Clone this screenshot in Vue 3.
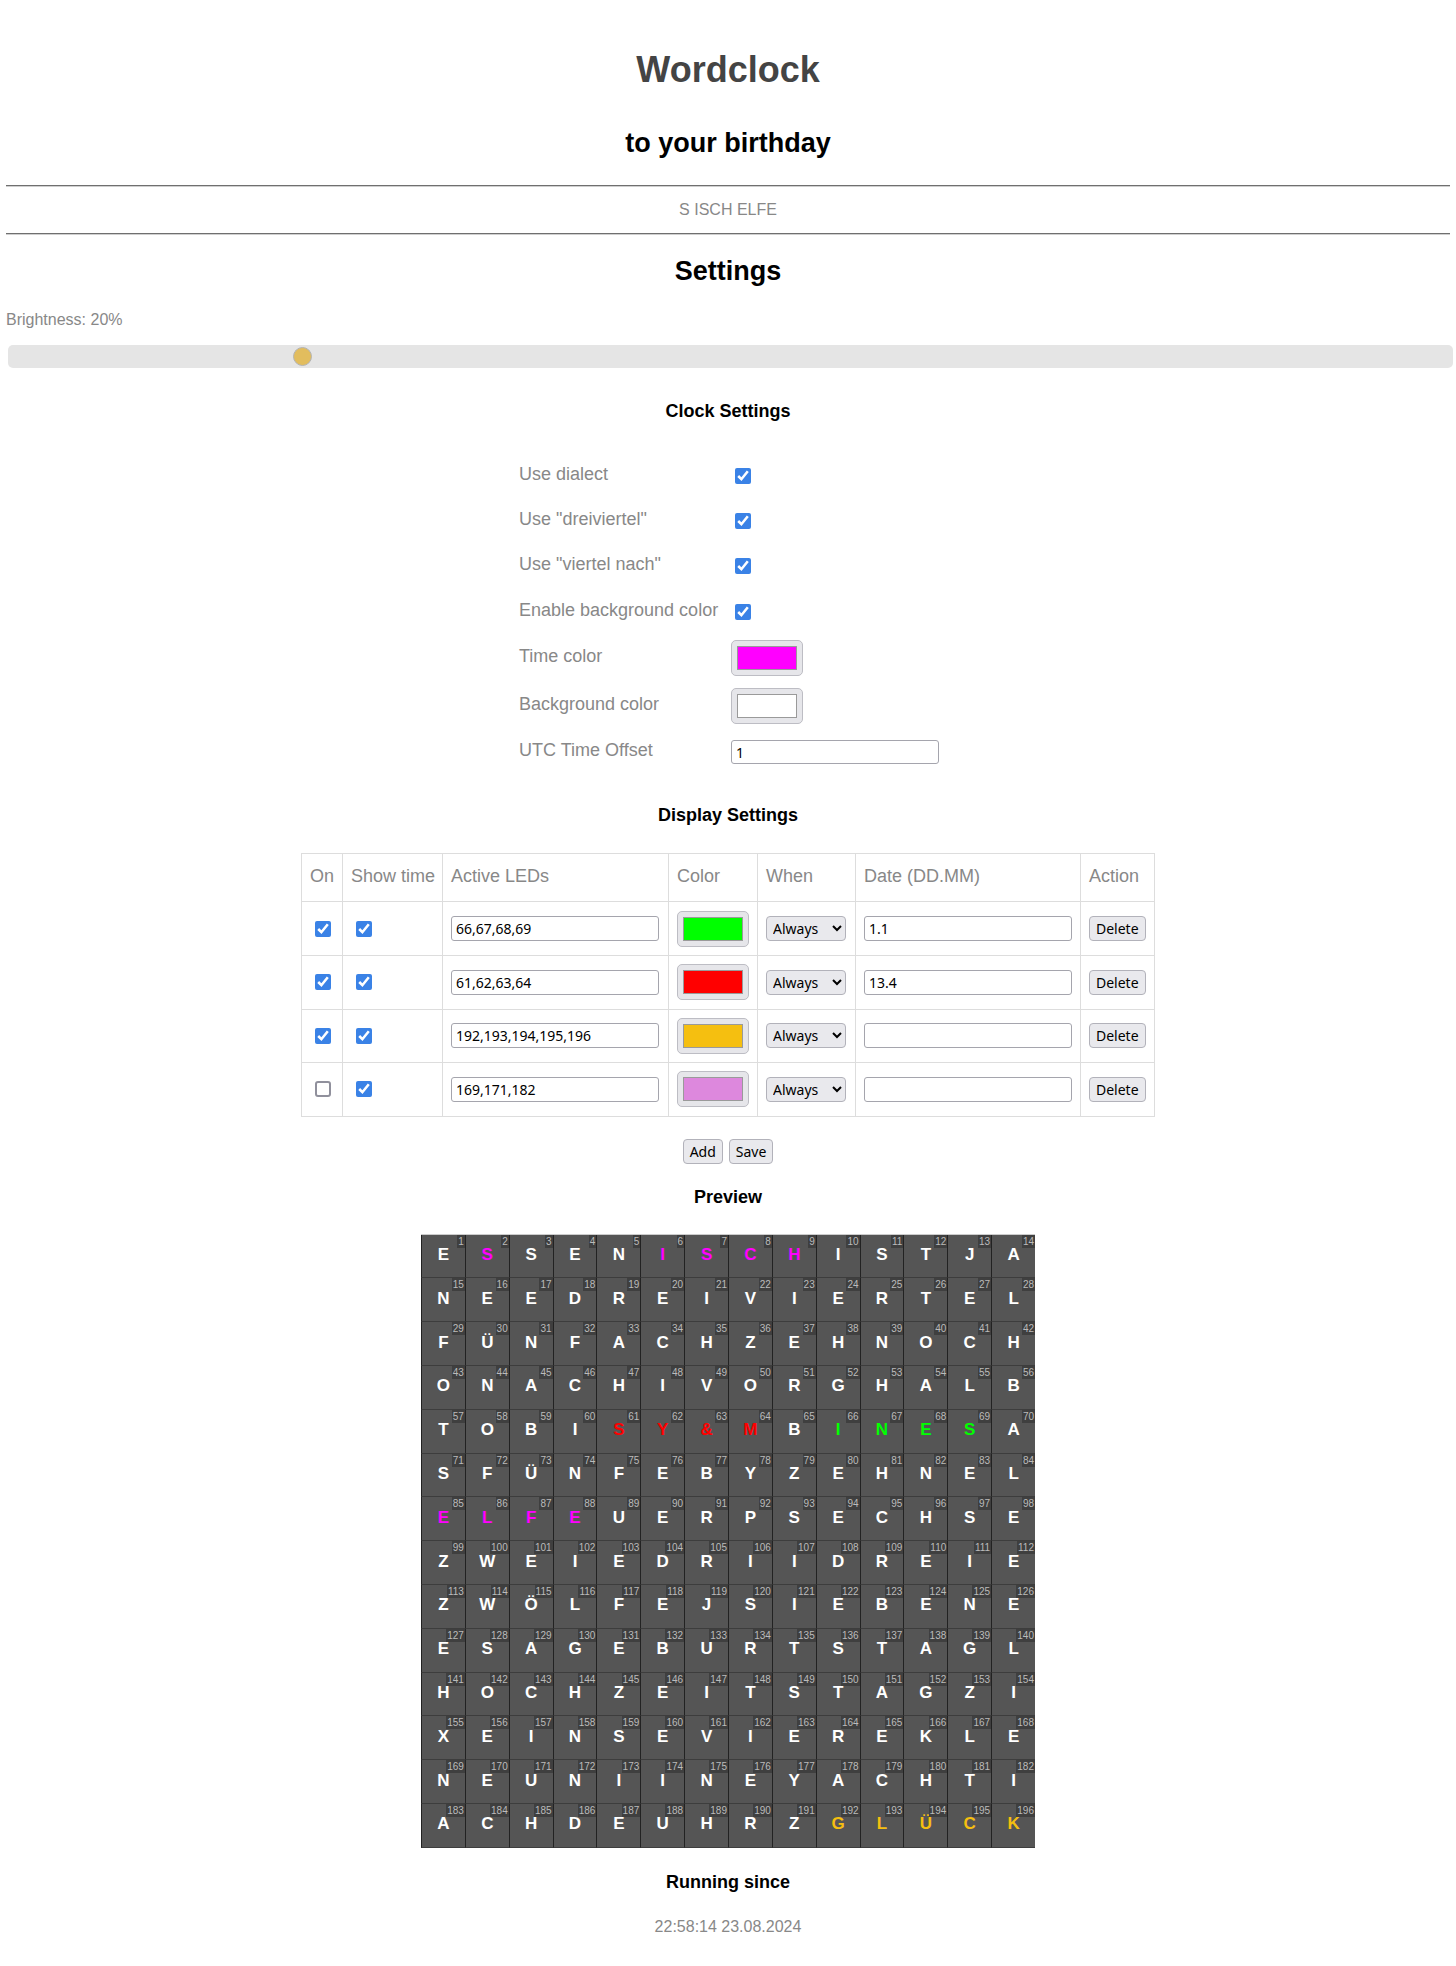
<script setup>
const rows = [
  'ESSENISCHISTJA',
  'NEEDREIVIERTEL',
  'FÜNFACHZEHNOCH',
  'ONACHIVORGHALB',
  'TOBISY&MBINESA',
  'SFÜNFEBYZEHNEL',
  'ELFEUERPSECHSE',
  'ZWEIEDRIIDREIE',
  'ZWÖLFEJSIEBENE',
  'ESAGEBURTSTAGL',
  'HOCHZEITSTAGZI',
  'XEINSEVIEREKLE',
  'NEUNIINEYACHTI',
  'ACHDEUHRZGLÜCK'
]

const displays = [
  { id: 1, on: true, showTime: true, leds: '66,67,68,69', color: '#00ff00', date: '1.1' },
  { id: 2, on: true, showTime: true, leds: '61,62,63,64', color: '#ff0000', date: '13.4' },
  { id: 3, on: true, showTime: true, leds: '192,193,194,195,196', color: '#f5bf10', date: '' },
  { id: 4, on: false, showTime: true, leds: '169,171,182', color: '#dd88dd', date: '' }
]

const timeLeds = [2, 6, 7, 8, 9, 85, 86, 87, 88]

function ledColor(n) {
  if (timeLeds.includes(n)) return '#ff00ff'
  for (const d of displays) {
    if (d.on && d.leds.split(',').map(Number).includes(n)) return d.color
  }
  return '#ffffff'
}

const cells = rows.join('').split('').map((letter, i) => ({
  n: i + 1,
  letter,
  color: ledColor(i + 1)
}))
</script>

<template>
  <div class="page">
    <h1 class="title">Wordclock</h1>
    <h2 class="subtitle">to your birthday</h2>
    <hr class="rule first" />
    <p class="current">S ISCH ELFE</p>
    <hr class="rule" />
    <h2 class="settings-title">Settings</h2>
    <p class="brightness">Brightness: 20%</p>
    <input class="slider" type="range" min="0" max="100" value="20" />

    <h3 class="section clock-title">Clock Settings</h3>
    <div class="clock-form">
      <label>Use dialect</label>
      <div><input class="check" type="checkbox" checked /></div>
      <label>Use "dreiviertel"</label>
      <div><input class="check" type="checkbox" checked /></div>
      <label>Use "viertel nach"</label>
      <div><input class="check" type="checkbox" checked /></div>
      <label>Enable background color</label>
      <div><input class="check" type="checkbox" checked /></div>
      <label>Time color</label>
      <div><input class="swatch" type="color" value="#ff00ff" /></div>
      <label>Background color</label>
      <div><input class="swatch" type="color" value="#ffffff" /></div>
      <label>UTC Time Offset</label>
      <div><input class="field short" type="text" value="1" /></div>
    </div>

    <h3 class="section display-title">Display Settings</h3>
    <table class="displays">
      <colgroup>
        <col style="width: 41px" />
        <col style="width: 100px" />
        <col style="width: 226px" />
        <col style="width: 89px" />
        <col style="width: 98px" />
        <col style="width: 225px" />
        <col style="width: 74px" />
      </colgroup>
      <thead>
        <tr>
          <th>On</th>
          <th>Show time</th>
          <th>Active LEDs</th>
          <th>Color</th>
          <th>When</th>
          <th>Date (DD.MM)</th>
          <th>Action</th>
        </tr>
      </thead>
      <tbody>
        <tr v-for="d in displays" :key="d.id">
          <td><input class="check in-table" type="checkbox" :checked="d.on" /></td>
          <td><input class="check in-table" type="checkbox" :checked="d.showTime" /></td>
          <td><input class="field" type="text" :value="d.leds" /></td>
          <td><input class="swatch" type="color" :value="d.color" /></td>
          <td>
            <select class="when">
              <option>Always</option>
            </select>
          </td>
          <td><input class="field" type="text" :value="d.date" /></td>
          <td><button class="btn" type="button">Delete</button></td>
        </tr>
      </tbody>
    </table>

    <div class="actions">
      <button class="btn" type="button">Add</button>
      <button class="btn" type="button">Save</button>
    </div>

    <h3 class="section preview-title">Preview</h3>
    <div class="clock-grid">
      <div v-for="c in cells" :key="c.n" class="cell" :style="{ color: c.color }">
        <span class="num">{{ c.n }}</span>
        <span class="letter">{{ c.letter }}</span>
      </div>
    </div>

    <h3 class="section running-title">Running since</h3>
    <p class="running">22:58:14 23.08.2024</p>
  </div>
</template>

<style>
body {
  margin: 0;
  background: #fff;
}
</style>

<style scoped>
.page {
  padding: 49px 6px 32px;
  font-family: 'Liberation Sans', Arial, sans-serif;
  font-size: 16px;
  color: #888;
  text-align: center;
}

h1, h2, h3, p {
  margin: 0;
}

.title {
  font-size: 36px;
  font-weight: 700;
  color: #444;
}

.subtitle {
  margin-top: 37px;
  font-size: 27px;
  color: #000;
}

.rule {
  margin: 14px 0 0;
  border: 0;
  border-top: 1px solid #6f6f6f;
  border-bottom: 1px solid #cfcfcf;
}

.rule.first {
  margin-top: 26px;
}

.current {
  margin-top: 14px;
}

.settings-title {
  margin-top: 21px;
  font-size: 27px;
  color: #000;
}

.brightness {
  margin-top: 24px;
  text-align: left;
}

.slider {
  display: block;
  appearance: none;
  -webkit-appearance: none;
  width: calc(100% + 1px);
  height: 23px;
  margin: 16px 0 0 2px;
  background: #e5e5e5;
  border-radius: 5px;
  outline: none;
}

.slider::-webkit-slider-thumb {
  -webkit-appearance: none;
  width: 19px;
  height: 19px;
  border-radius: 50%;
  background: #e2bd5e;
  border: 1px solid #b4b4b4;
  box-sizing: border-box;
}

.section {
  font-size: 18px;
  font-weight: 700;
  color: #000;
}

.clock-title {
  margin-top: 33px;
}

.clock-form {
  display: grid;
  grid-template-columns: 212px 208px;
  grid-template-rows: repeat(4, 45.33px) 48px 48px 44px;
  width: 420px;
  margin: 31px auto 0;
  padding-left: 2px;
  align-items: center;
  text-align: left;
  font-size: 18px;
}

.clock-form label {
  padding-bottom: 3px;
}

.clock-form > div {
  display: flex;
  align-items: center;
}

.check {
  width: 16px;
  height: 16px;
  margin: 0 0 0 4px;
  accent-color: #3a82e6;
}

.check:not(:checked) {
  appearance: none;
  -webkit-appearance: none;
  box-sizing: border-box;
  border: 2px solid #90909c;
  border-radius: 3px;
  background: #fff;
}

.check.in-table {
  display: block;
  margin: 0 0 0 5px;
}

.swatch {
  display: block;
  width: 72px;
  height: 36px;
  padding: 0;
  border: 1px solid #bdbdc4;
  border-radius: 5px;
  background: #e6e6ea;
  box-sizing: border-box;
}

.swatch::-webkit-color-swatch-wrapper {
  padding: 5px;
}

.swatch::-webkit-color-swatch {
  border: 1px solid #9a9a9a;
  border-radius: 0;
}

.field {
  display: block;
  box-sizing: border-box;
  width: 208px;
  height: 25px;
  padding: 1px 4px;
  border: 1px solid #a5a5ad;
  border-radius: 3px;
  font-family: 'Noto Sans', sans-serif;
  font-size: 14px;
  color: #000;
  background: #fff;
}

.field.short {
  height: 24px;
}

.display-title {
  margin-top: 31px;
}

.displays {
  width: 853px;
  margin: 27px auto 0;
  border-collapse: collapse;
  table-layout: fixed;
  font-size: 18px;
  text-align: left;
}

.displays th,
.displays td {
  padding: 0 8px;
  border: 1px solid #ddd;
  vertical-align: middle;
}

.displays th {
  height: 48px;
  padding-bottom: 3px;
  box-sizing: border-box;
  font-weight: 400;
  white-space: nowrap;
}

.displays td {
  height: 52.6px;
}

.when {
  display: block;
  width: 80px;
  height: 25px;
  padding: 0 2px;
  border: 1px solid #b2b2ba;
  border-radius: 4px;
  background-color: #e9e9ed;
  font-family: 'Noto Sans', sans-serif;
  font-size: 14px;
  color: #000;
}

.btn {
  height: 25px;
  padding: 0 6px;
  border: 1px solid #b2b2ba;
  border-radius: 4px;
  background: #e9e9ed;
  font-family: 'Noto Sans', sans-serif;
  font-size: 14px;
  color: #000;
}

.actions {
  display: flex;
  justify-content: center;
  gap: 6px;
  margin-top: 22px;
}

.preview-title {
  margin-top: 23px;
}

.clock-grid {
  display: grid;
  grid-template-columns: repeat(14, 1fr);
  grid-auto-rows: 43.8px;
  width: 614px;
  margin: 26px auto 0;
  border-top: 1px solid #ccc;
  background: #555;
}

.cell {
  position: relative;
  box-sizing: border-box;
  display: flex;
  align-items: center;
  justify-content: center;
  padding-bottom: 2px;
  border-left: 1px solid #222;
  border-bottom: 1px solid #3d3d3d;
}

.letter {
  font-size: 17px;
  font-weight: 700;
}

.num {
  position: absolute;
  top: 0;
  right: 0;
  padding: 0 1px;
  background: #3f3f3f;
  color: #bbb;
  font-size: 10px;
  font-weight: 400;
  line-height: 13px;
}

.running-title {
  margin-top: 24px;
}

.running {
  margin-top: 25px;
}
</style>
